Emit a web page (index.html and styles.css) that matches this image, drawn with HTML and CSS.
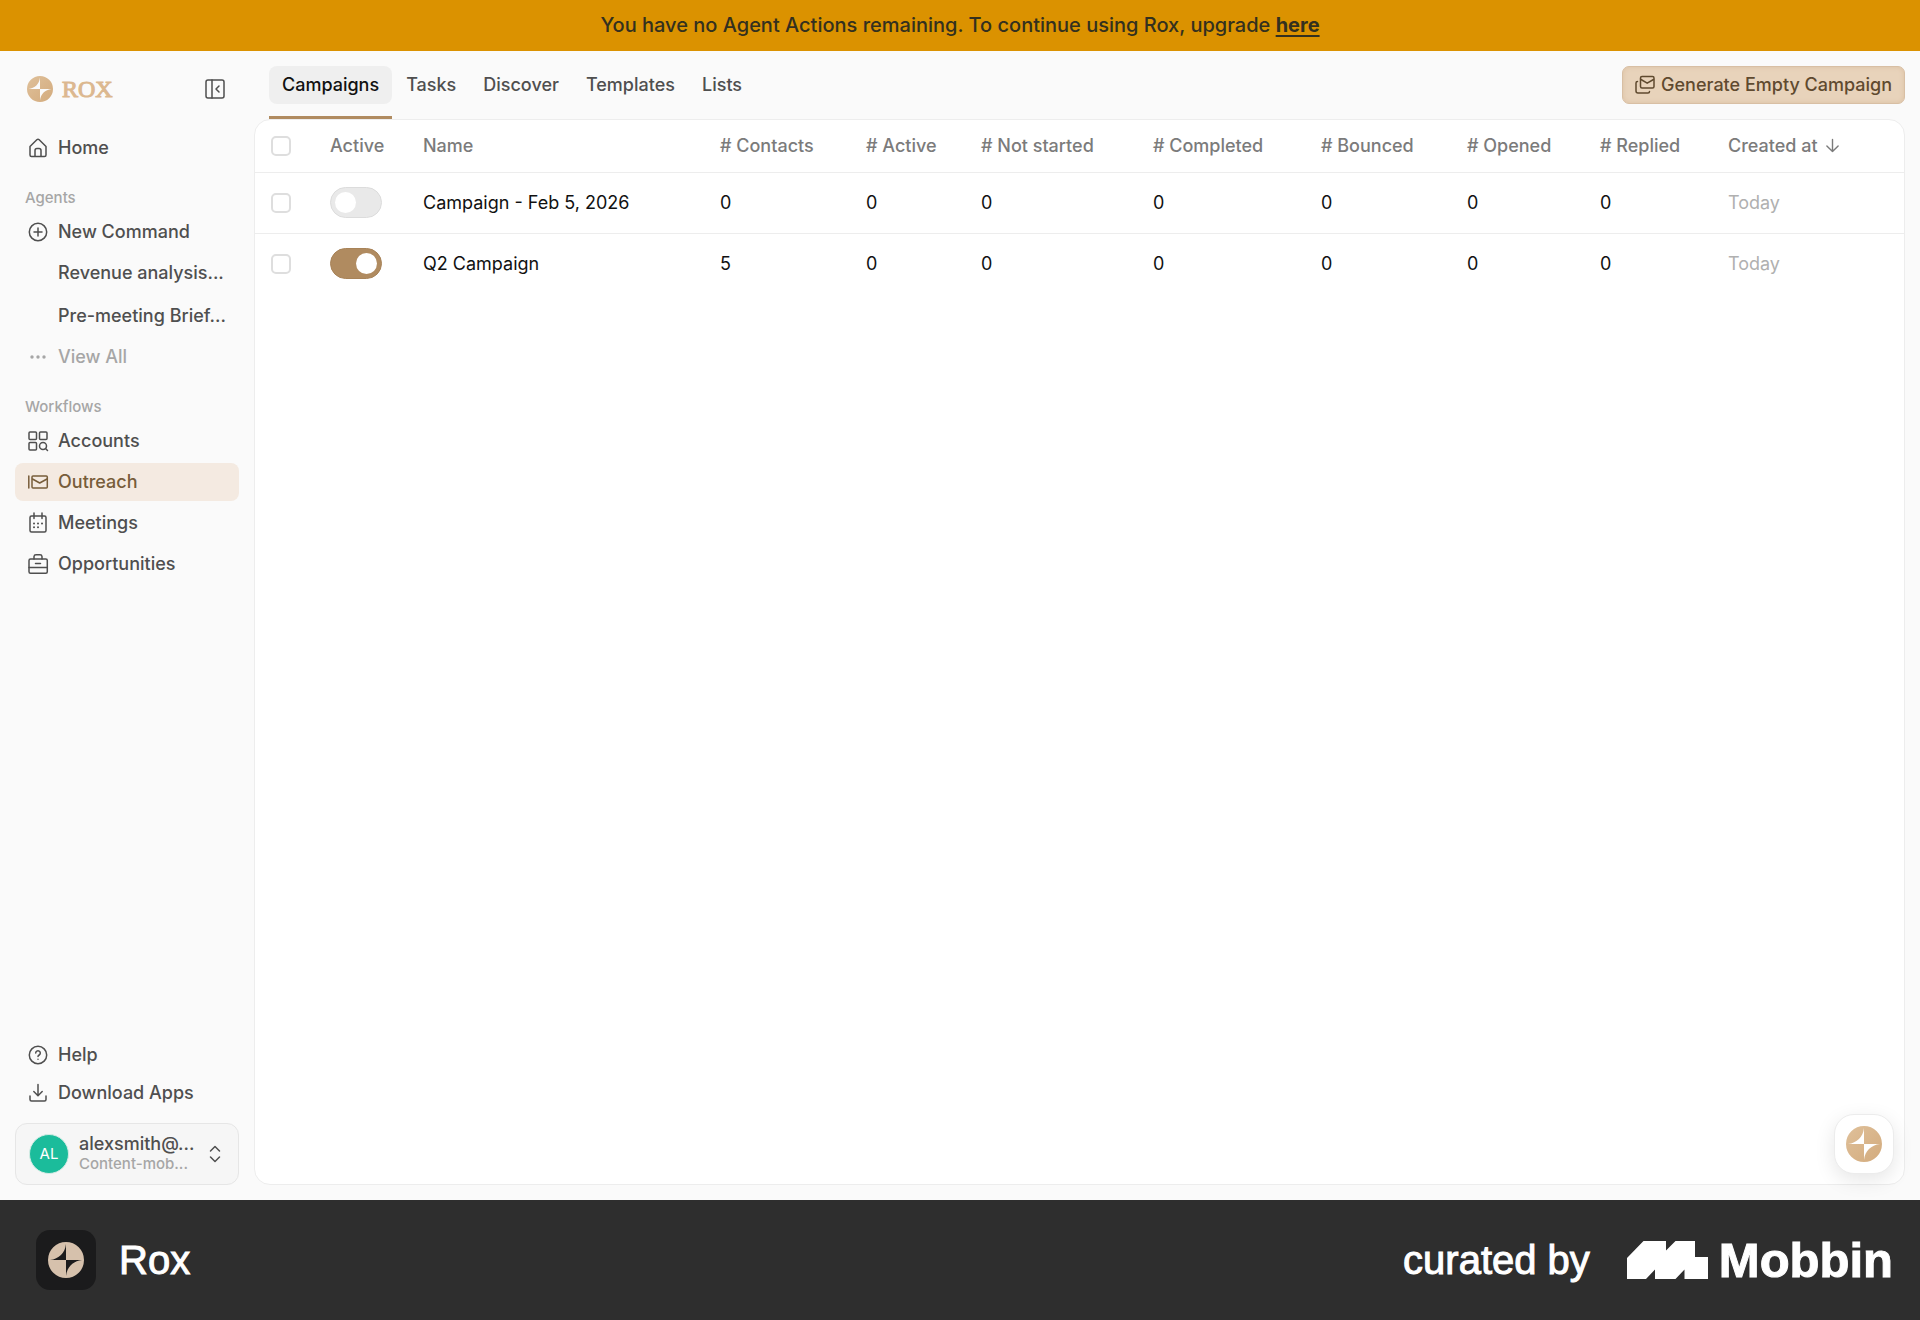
FILE: index.html
```html
<!DOCTYPE html>
<html lang="en">
<head>
    <meta charset="UTF-8">
    <meta name="viewport" content="width=device-width, initial-scale=1.0">
    <title>Rox - Outreach Campaigns</title>
    <link rel="stylesheet" href="styles.css">
</head>
<body>

<!-- Shared logo mark -->
<svg class="defs" width="0" height="0" aria-hidden="true">
    <defs>
        <linearGradient id="sand" x1="0" y1="0" x2="1" y2="1">
            <stop offset="0" stop-color="#dfc09a"/>
            <stop offset="1" stop-color="#d3ab7d"/>
        </linearGradient>
    </defs>
    <symbol id="spark" viewBox="0 0 36 36">
        <path fill-rule="evenodd" d="M18 0a18 18 0 1 1 0 36a18 18 0 1 1 0-36ZM18 2C17 11 11 17 2 18H18ZM18 18V34C19 25 25 19 34 18Z"/>
    </symbol>
</svg>

<div class="banner">
    <p>You have no Agent Actions remaining. To continue using Rox, upgrade <a href="#">here</a></p>
</div>

<div class="app">
    <aside class="sidebar">
        <div class="sidebar-header">
            <a href="#" class="logo">
                <svg class="logo-mark" fill="url(#sand)"><use href="#spark"/></svg>
                <span>ROX</span>
            </a>
            <button type="button" class="collapse" aria-label="Collapse sidebar">
                <svg class="icon" viewBox="0 0 20 20"><rect x="1" y="1" width="18" height="18" rx="2"/><path d="M7 1v18M14 7l-3 3 3 3"/></svg>
            </button>
        </div>

        <nav class="menu">
            <a href="#" class="item">
                <svg class="icon" viewBox="0 0 20 20"><path d="M2 8.500 8.800 1.800a1.800 1.800 0 0 1 2.400 0L18 8.500V17a1.500 1.500 0 0 1-1.500 1.500h-13A1.500 1.500 0 0 1 2 17ZM7 18.500V12.500a2 2 0 0 1 2-2h2a2 2 0 0 1 2 2v6"/></svg>
                Home
            </a>

            <h2>Agents</h2>
            <a href="#" class="item">
                <svg class="icon" viewBox="0 0 20 20"><circle cx="10" cy="10" r="8.700"/><path d="M10 6v8M6 10h8"/></svg>
                New Command
            </a>
            <div class="submenu">
                <a href="#" class="item">Revenue analysis...</a>
                <a href="#" class="item">Pre-meeting Brief...</a>
            </div>
            <a href="#" class="item muted">
                <svg class="icon dots" viewBox="0 0 20 20"><circle cx="4" cy="10" r="1.700"/><circle cx="10" cy="10" r="1.700"/><circle cx="16" cy="10" r="1.700"/></svg>
                View All
            </a>

            <h2>Workflows</h2>
            <a href="#" class="item">
                <svg class="icon" viewBox="0 0 20 20"><rect x="1" y="1" width="7.500" height="7.500" rx="1"/><rect x="11.500" y="1" width="7.500" height="7.500" rx="1"/><rect x="1" y="11.500" width="7.500" height="7.500" rx="1"/><circle cx="15" cy="15" r="3.500"/><path d="m17.500 17.500 2 2"/></svg>
                Accounts
            </a>
            <a href="#" class="item active">
                <svg class="icon" viewBox="0 0 20 20"><path d="M.800 4v12"/><rect x="4" y="4" width="15.300" height="12" rx="1"/><path d="m4.500 7 7.200 4L19 7"/></svg>
                Outreach
            </a>
            <a href="#" class="item">
                <svg class="icon" viewBox="0 0 20 20"><rect x="2" y="3" width="16" height="16" rx="1.500"/><path d="M6 0v5.500M14 0v5.500"/><path stroke-width="2" d="M6 10.500h.01M10 10.500h.01M14 10.500h.01M6 14.200h.01M10 14.200h.01"/></svg>
                Meetings
            </a>
            <a href="#" class="item">
                <svg class="icon" viewBox="0 0 20 20"><rect x="1" y="5" width="18.300" height="14.300" rx="1.500"/><path d="M6 5V2.500A2 2 0 0 1 8 .7h4a2 2 0 0 1 2 1.800V5M1 13.500h18M7.500 9.500h5"/></svg>
                Opportunities
            </a>
        </nav>

        <nav class="support">
            <a href="#" class="item">
                <svg class="icon" viewBox="0 0 20 20"><circle cx="10" cy="10" r="8.700"/><path d="M7.700 8a2.300 2.300 0 1 1 3.500 2c-.800.500-1.200.800-1.200 1.500M10 14.300h.01"/></svg>
                Help
            </a>
            <a href="#" class="item">
                <svg class="icon" viewBox="0 0 20 20"><path d="M10 1.500v11M5.800 8.500 10 12.700l4.200-4.200M2 13v3.500A1.500 1.500 0 0 0 3.500 18h13a1.500 1.500 0 0 0 1.500-1.500V13"/></svg>
                Download Apps
            </a>
        </nav>

        <button type="button" class="account">
            <span class="avatar">AL</span>
            <span class="account-text">
                <span class="account-name">alexsmith@...</span>
                <span class="account-org">Content-mob...</span>
            </span>
            <svg class="icon" viewBox="0 0 20 20"><path d="m5.500 7 4.500-4.500L14.500 7M5.500 13l4.500 4.500 4.500-4.500"/></svg>
        </button>
    </aside>

    <main class="main">
        <div class="toolbar">
            <nav class="tabs">
                <a href="#" class="tab current"><span>Campaigns</span></a>
                <a href="#" class="tab"><span>Tasks</span></a>
                <a href="#" class="tab"><span>Discover</span></a>
                <a href="#" class="tab"><span>Templates</span></a>
                <a href="#" class="tab"><span>Lists</span></a>
            </nav>
            <button type="button" class="generate">
                <svg class="icon" viewBox="0 0 20 20"><rect x="5.500" y="1.500" width="13.500" height="11.500" rx="1.500"/><path d="m6 4.500 6.200 3.700L18.500 4.500M2.500 6.500A1.500 1.500 0 0 0 1 8v8a2 2 0 0 0 2 2h10a1.500 1.500 0 0 0 1.500-1.500"/></svg>
                Generate Empty Campaign
            </button>
        </div>

        <div class="panel">
            <table>
                <colgroup>
                    <col class="col-check">
                    <col class="col-toggle">
                    <col class="col-name">
                    <col class="col-contacts">
                    <col class="col-active">
                    <col class="col-waiting">
                    <col class="col-completed">
                    <col class="col-bounced">
                    <col class="col-opened">
                    <col class="col-replied">
                    <col class="col-created">
                </colgroup>
                <thead>
                    <tr>
                        <th><input type="checkbox" class="check" aria-label="Select all campaigns"></th>
                        <th>Active</th>
                        <th>Name</th>
                        <th># Contacts</th>
                        <th># Active</th>
                        <th># Not started</th>
                        <th># Completed</th>
                        <th># Bounced</th>
                        <th># Opened</th>
                        <th># Replied</th>
                        <th>
                            <span class="sorted">Created at
                                <svg class="icon sort" viewBox="0 0 16 16"><path d="M8 1.500v13M2 8.500l6 6 6-6"/></svg>
                            </span>
                        </th>
                    </tr>
                </thead>
                <tbody>
                    <tr>
                        <td><input type="checkbox" class="check" aria-label="Select Campaign - Feb 5, 2026"></td>
                        <td><input type="checkbox" class="toggle" aria-label="Campaign - Feb 5, 2026 active"></td>
                        <td>Campaign - Feb 5, 2026</td>
                        <td>0</td>
                        <td>0</td>
                        <td>0</td>
                        <td>0</td>
                        <td>0</td>
                        <td>0</td>
                        <td>0</td>
                        <td class="date">Today</td>
                    </tr>
                    <tr>
                        <td><input type="checkbox" class="check" aria-label="Select Q2 Campaign"></td>
                        <td><input type="checkbox" class="toggle" aria-label="Q2 Campaign active" checked></td>
                        <td>Q2 Campaign</td>
                        <td>5</td>
                        <td>0</td>
                        <td>0</td>
                        <td>0</td>
                        <td>0</td>
                        <td>0</td>
                        <td>0</td>
                        <td class="date">Today</td>
                    </tr>
                </tbody>
            </table>
        </div>

        <button type="button" class="assistant" aria-label="Open assistant">
            <svg fill="url(#sand)"><use href="#spark"/></svg>
        </button>
    </main>
</div>

<footer>
    <div class="product">
        <span class="product-icon"><svg><use href="#spark"/></svg></span>
        <span>Rox</span>
    </div>
    <div class="credit">
        <span>curated by</span>
        <a href="#" class="mobbin">
            <svg viewBox="0 0 81 38"><path d="M0 17 16.500 0H39v9.500L48.500 0H68v16h13v22H57.500V28.500L48.500 38H28V28.500L19 38H0Z"/></svg>
            <span>Mobbin</span>
        </a>
    </div>
</footer>

</body>
</html>
```

FILE: styles.css
```css
* {
    box-sizing: border-box;
}
body {
    font-family: Inter, "Liberation Sans", sans-serif;
    font-size: 18px;
    line-height: 24px;
    color: #4f4f4f;
    background-color: #fafafa;
    margin: 0;
    min-height: 100vh;
    display: flex;
    flex-direction: column;
}
a {
    color: inherit;
    text-decoration: none;
}
button {
    font: inherit;
    color: inherit;
    cursor: pointer;
}
.defs {
    position: absolute;
}
.icon {
    width: 20px;
    height: 20px;
    flex: none;
    fill: none;
    stroke: currentColor;
    stroke-width: 1.5;
    stroke-linecap: round;
    stroke-linejoin: round;
    overflow: visible;
}

/* Banner */
.banner {
    background-color: #db9200;
    color: #33301f;
    font-size: 20px;
    font-weight: 500;
    text-align: center;
    padding: 13px 16px;
}
.banner p {
    margin: 0;
    line-height: 25px;
}
.banner a {
    font-weight: 700;
    text-decoration: underline;
    text-underline-offset: 3px;
}

/* Sidebar */
.app {
    flex: 1;
    display: flex;
}
.sidebar {
    width: 254px;
    flex: none;
    display: flex;
    flex-direction: column;
    padding: 18px 15px 15px;
    font-weight: 500;
}
.sidebar-header {
    display: flex;
    align-items: center;
    justify-content: space-between;
    height: 40px;
    padding: 0 14px 0 12px;
}
.logo {
    display: flex;
    align-items: center;
    gap: 9px;
    color: #dcb88f;
    font-family: "Liberation Serif", serif;
    font-size: 24px;
    font-weight: 400;
    -webkit-text-stroke: 1px #dcb88f;
}
.logo-mark {
    width: 26px;
    height: 26px;
}
.collapse {
    display: flex;
    padding: 0;
    border: 0;
    background: none;
}
.menu, .submenu, .support {
    display: flex;
    flex-direction: column;
    gap: 3px;
}
.menu {
    padding-top: 20px;
}
.submenu {
    gap: 5px;
}
.submenu .item {
    padding-left: 43px;
}
.support {
    gap: 0;
    margin-top: auto;
    padding-bottom: 11px;
}
.menu h2 {
    margin: 15px 0 0;
    padding: 0 10px;
    font-size: 15px;
    font-weight: 500;
    line-height: 25px;
    color: #a6a6a6;
}
.item {
    display: flex;
    align-items: center;
    gap: 10px;
    height: 38px;
    padding: 0 13px;
    border-radius: 8px;
    white-space: nowrap;
}
.item.active {
    background-color: #f4eae1;
    color: #775d3a;
}
.item.muted {
    color: #a6a6a6;
}
.dots {
    fill: currentColor;
    stroke: none;
}
.account {
    display: flex;
    align-items: center;
    gap: 10px;
    height: 62px;
    padding: 0 13px;
    border: 1px solid #e6e6e6;
    border-radius: 12px;
    background-color: #f6f6f6;
    text-align: left;
}
.avatar {
    width: 40px;
    height: 40px;
    flex: none;
    border: 1px solid #d5ece5;
    border-radius: 50%;
    background-color: #1bbc9b;
    color: #fff;
    font-size: 15px;
    font-weight: 400;
    line-height: 38px;
    text-align: center;
}
.account-text {
    flex: 1;
    display: flex;
    flex-direction: column;
    white-space: nowrap;
    line-height: 20px;
}
.account-name {
    font-size: 18px;
    font-weight: 500;
}
.account-org {
    font-size: 15px;
    color: #a6a6a6;
}

/* Main area */
.main {
    flex: 1;
    min-width: 0;
    display: flex;
    flex-direction: column;
    position: relative;
    padding: 15px 15px 15px 0;
}
.toolbar {
    display: flex;
    justify-content: space-between;
    align-items: flex-start;
    padding-left: 15px;
}
.tabs {
    display: flex;
    gap: 1px;
}
.tab {
    height: 53px;
    font-weight: 500;
}
.tab span {
    display: block;
    padding: 7px 13px;
    border-radius: 8px;
}
.tab.current {
    color: #111;
    border-bottom: 3px solid #b08b60;
}
.tab.current span {
    background-color: #efefef;
}
.generate {
    display: flex;
    align-items: center;
    gap: 6px;
    height: 38px;
    padding: 0 12px;
    border: 1px solid #d8bfa4;
    border-radius: 7px;
    background-color: #e8d3bb;
    color: #5f4a2f;
    font-weight: 500;
    white-space: nowrap;
    box-shadow: inset 0 0 5px #dcc1a3;
}
.panel {
    flex: 1;
    border: 1px solid #ededed;
    border-radius: 16px;
    background-color: #fff;
    overflow: hidden;
}

/* Campaign table */
table {
    width: 100%;
    table-layout: fixed;
    border-collapse: collapse;
}
th, td {
    padding: 0 0 0 16px;
    text-align: left;
    white-space: nowrap;
}
th {
    height: 52px;
    font-weight: 500;
    color: #7b7b7b;
}
td {
    height: 61px;
    color: #111;
}
tr {
    border-bottom: 1px solid #ededed;
}
tbody tr:last-child {
    border-bottom: 0;
}
.date {
    color: #b0b0b0;
}
.col-check { width: 59px; }
.col-toggle { width: 93px; }
.col-contacts { width: 146px; }
.col-active { width: 115px; }
.col-waiting { width: 172px; }
.col-completed { width: 168px; }
.col-bounced { width: 146px; }
.col-opened { width: 133px; }
.col-replied { width: 128px; }
.col-created { width: 192px; }
.sorted {
    display: flex;
    align-items: center;
    gap: 7px;
}
.sort {
    width: 15px;
    height: 15px;
}
.check, .toggle {
    appearance: none;
    display: block;
    margin: 0;
    cursor: pointer;
}
.check {
    width: 20px;
    height: 20px;
    border: 2px solid #dedede;
    border-radius: 5px;
    background-color: #fff;
}
.check:checked {
    background-color: #b08b60;
}
.toggle {
    width: 52px;
    height: 31px;
    padding: 4px;
    border: 1px solid #dcdcdc;
    border-radius: 16px;
    background-color: #e9e9e9;
}
.toggle::before {
    content: "";
    display: block;
    width: 21px;
    height: 21px;
    border-radius: 50%;
    background-color: #fff;
}
.toggle:checked {
    border-color: #a88358;
    background-color: #b08b60;
}
.toggle:checked::before {
    margin-left: auto;
}

/* Floating button */
.assistant {
    position: absolute;
    right: 26px;
    bottom: 26px;
    display: grid;
    place-items: center;
    width: 60px;
    height: 60px;
    padding: 0;
    border: 1px solid #ececec;
    border-radius: 20px;
    background-color: #fff;
    box-shadow: 0 6px 20px rgba(0, 0, 0, 0.1);
}
.assistant svg {
    width: 36px;
    height: 36px;
}

/* Footer */
footer {
    display: flex;
    align-items: center;
    justify-content: space-between;
    height: 120px;
    padding: 0 27px 0 36px;
    background-color: #2e2e2e;
    color: #fff;
    font-family: "Liberation Sans", Arial, sans-serif;
    font-size: 40px;
    line-height: 48px;
    -webkit-text-stroke: 1px #fff;
}
.product, .credit, .mobbin {
    display: flex;
    align-items: center;
}
.product {
    gap: 23px;
}
.product-icon {
    display: grid;
    place-items: center;
    width: 60px;
    height: 60px;
    border-radius: 14px;
    background-color: #1b1b1c;
}
.product-icon svg {
    width: 36px;
    height: 36px;
    fill: #d6c1ac;
}
.credit {
    gap: 37px;
}
.mobbin {
    gap: 11px;
    font-size: 49px;
    font-weight: 700;
}
.mobbin svg {
    width: 81px;
    height: 38px;
    fill: #fff;
}
```
